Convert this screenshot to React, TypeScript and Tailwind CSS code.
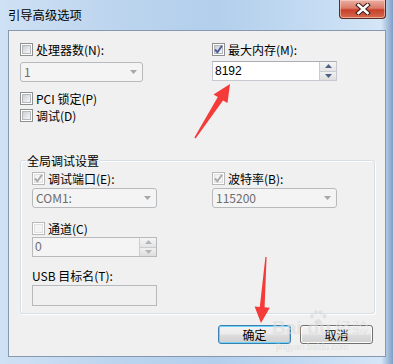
import React from "react";

const FONT = '"Noto Sans CJK SC", "Liberation Sans", sans-serif';

function CheckBox({ checked = false, disabled = false }: { checked?: boolean; disabled?: boolean }) {
  return (
    <div
      className={
        "relative w-[13px] h-[13px] shrink-0 border p-[1px] bg-white " +
        (disabled ? "border-[#b8b8b8]" : "border-[#8e8f8f]")
      }
    >
      <div
        className={
          "w-full h-full border " +
          (disabled
            ? "border-[#e0e0e0] bg-[#f4f4f4]"
            : "border-[#b4b8bd] bg-[linear-gradient(135deg,#c9cdd3_0%,#e4e6e9_55%,#f7f7f8_100%)]")
        }
      />
      {checked && (
        <svg className="absolute left-0 top-0" width="11" height="11" viewBox="0 0 11 11">
          <path
            d="M2 5.5 L4.4 8.2 L9 1.8"
            fill="none"
            stroke={disabled ? "#a9a9a9" : "#4a5d9a"}
            strokeWidth="1.9"
            strokeLinejoin="miter"
          />
        </svg>
      )}
    </div>
  );
}

function CheckRow({ label, checked, disabled }: { label: string; checked?: boolean; disabled?: boolean }) {
  return (
    <div className="flex items-center h-[13px] gap-[3px]">
      <CheckBox checked={checked} disabled={disabled} />
      <span className="text-[12px] leading-[13px] text-black whitespace-nowrap">{label}</span>
    </div>
  );
}

function Combo({ value, w }: { value: string; w: string }) {
  return (
    <div
      className={
        "flex items-center justify-between h-[20px] rounded-[3px] border border-[#b6babd] bg-[#f4f4f4] pl-[3px] pr-[5px] " +
        w
      }
    >
      <span className="text-[12px] leading-[14px] text-[#6d6d6d]">{value}</span>
      <svg width="7" height="4" viewBox="0 0 7 4">
        <path d="M0 0 H7 L3.5 4 Z" fill="#a7a7a7" />
      </svg>
    </div>
  );
}

function SpinBtns({ disabled }: { disabled?: boolean }) {
  const c = disabled ? "#b5b5b5" : "#4d6185";
  return (
    <div className="flex flex-col w-[17px] h-full border-l border-[#c9ccd0]">
      <div className="flex-1 flex items-center justify-center border-b border-[#c9ccd0] bg-[linear-gradient(#f5f5f5,#e4e4e4)]">
        <svg width="7" height="4" viewBox="0 0 7 4">
          <path d="M0 4 H7 L3.5 0 Z" fill={c} />
        </svg>
      </div>
      <div className="flex-1 flex items-center justify-center bg-[linear-gradient(#f0f0f0,#dedede)]">
        <svg width="7" height="4" viewBox="0 0 7 4">
          <path d="M0 0 H7 L3.5 4 Z" fill={c} />
        </svg>
      </div>
    </div>
  );
}

function Spin({ value, disabled }: { value: string; disabled?: boolean }) {
  return (
    <div
      className={
        "flex items-stretch h-[20px] w-[125px] border " +
        (disabled ? "border-[#b6babd] bg-[#f4f4f4]" : "border-[#c6cad0] border-t-[#abadb3] bg-white")
      }
    >
      <span
        className={
          "flex-1 flex items-center pl-[2px] text-[12px] leading-[14px] " +
          (disabled ? "text-[#6d6d6d]" : "text-black")
        }
        style={{ fontFamily: '"Liberation Sans", sans-serif' }}
      >
        {value}
      </span>
      <SpinBtns disabled={disabled} />
    </div>
  );
}

function Button({ label, def }: { label: string; def?: boolean }) {
  return (
    <div
      className={
        "flex items-center justify-center w-[73px] h-[19px] rounded-[3px] border text-[12px] text-black bg-[linear-gradient(#f3f3f3_0%,#ebebeb_48%,#dddddd_52%,#cfcfcf_100%)] " +
        (def
          ? "border-[#3c7fb1] shadow-[inset_0_0_0_1px_#6fd4fb]"
          : "border-[#707070] shadow-[inset_0_0_0_1px_#fbfbfb]")
      }
    >
      {label}
    </div>
  );
}

export default function App() {
  return (
    <div
      className="relative w-[393px] h-[364px] overflow-hidden bg-[linear-gradient(90deg,#cfe1f4_0%,#bcd4ee_30%,#b3cfec_55%,#c4dbf2_80%,#d4e6f7_97%,#7f9fc6_100%)]"
      style={{ fontFamily: FONT }}
    >
      {/* title bar */}
      <div className="flex justify-between h-[30px] pl-[8px] pr-[7px]">
        <span className="self-center text-[12.3px] leading-[14px] text-black -mt-[1px]">引导高级选项</span>
        <div className="flex items-center justify-center w-[47px] h-[19px] rounded-b-[4px] border border-t-0 border-[#5b2b24] bg-[linear-gradient(#eab0a4_0%,#dc7b68_45%,#c8402a_55%,#d66a4f_100%)] shadow-[inset_0_0_0_1px_rgba(255,220,210,0.55)]">
          <svg width="16" height="12" viewBox="0 0 16 12">
            <path d="M3.5 2 L12.5 10 M12.5 2 L3.5 10" stroke="#3d1e18" strokeWidth="4.6" strokeLinecap="square" />
            <path d="M3.5 2 L12.5 10 M12.5 2 L3.5 10" stroke="#ffffff" strokeWidth="2.6" strokeLinecap="square" />
          </svg>
        </div>
      </div>

      {/* client area */}
      <div className="ml-[8px] mr-[7px] h-[327px] border border-[#8699b0] bg-[#f0f0f0] flex flex-col">
        {/* top options */}
        <div className="flex pl-[11px] pt-[12px]">
          <div className="flex flex-col w-[192px]">
            <CheckRow label="处理器数(N):" />
            <div className="mt-[6px]">
              <Combo value="1" w="w-[123px]" />
            </div>
            <div className="mt-[10px]">
              <CheckRow label="PCI 锁定(P)" />
            </div>
            <div className="mt-[4px]">
              <CheckRow label="调试(D)" />
            </div>
          </div>
          <div className="flex flex-col">
            <CheckRow label="最大内存(M):" checked />
            <div className="mt-[5px]">
              <Spin value="8192" />
            </div>
          </div>
        </div>

        {/* group box */}
        <div className="mt-[38px] ml-[11px] w-[355px] h-[154px] rounded-[3px] border border-[#d5dfe5] shadow-[inset_1px_1px_0_#ffffff,1px_1px_0_#ffffff] flex flex-col">
          <span className="-mt-[9px] ml-[5px] px-[1px] w-fit h-[17px] leading-[17px] bg-[#f0f0f0] text-[12px] text-black">
            全局调试设置
          </span>
          <div className="flex pl-[11px] mt-[3px]">
            <div className="flex flex-col w-[180px]">
              <CheckRow label="调试端口(E):" checked disabled />
              <div className="mt-[3px]">
                <Combo value="COM1:" w="w-[125px]" />
              </div>
              <div className="mt-[14px]">
                <CheckRow label="通道(C)" disabled />
              </div>
              <div className="mt-[2px]">
                <Spin value="0" disabled />
              </div>
              <span className="mt-[11px] h-[16px] leading-[16px] text-[12px] text-black">USB 目标名(T):</span>
              <div className="mt-[1px] w-[125px] h-[21px] border border-[#b6babd] bg-[#f0f0f0]" />
            </div>
            <div className="flex flex-col">
              <CheckRow label="波特率(B):" checked disabled />
              <div className="mt-[3px]">
                <Combo value="115200" w="w-[125px]" />
              </div>
            </div>
          </div>
        </div>

        {/* buttons */}
        <div className="flex justify-end gap-[9px] mt-[11px] pr-[12px]">
          <Button label="确定" def />
          <Button label="取消" />
        </div>
      </div>

      {/* watermark */}
      <svg className="absolute left-[308px] top-[310px] pointer-events-none opacity-60" width="20" height="16" viewBox="0 0 20 16">
        <ellipse cx="4" cy="6" rx="2" ry="2.6" fill="#d8d8d8" />
        <ellipse cx="8" cy="2.6" rx="2" ry="2.4" fill="#d8d8d8" />
        <ellipse cx="12.5" cy="2.6" rx="2" ry="2.4" fill="#d8d8d8" />
        <ellipse cx="16.5" cy="6" rx="2" ry="2.6" fill="#d8d8d8" />
        <path d="M6 13 Q10 5 14.5 13 Q10 15.5 6 13 Z" fill="#d8d8d8" />
      </svg>
      <div className="absolute left-[272px] top-[318px] flex items-end pointer-events-none select-none opacity-60">
        <span className="text-[19px] leading-[20px] font-bold text-[#dcdcdc]" style={{ fontFamily: '"Liberation Sans", sans-serif' }}>
          Bai
        </span>
        <span className="text-[19px] leading-[20px] font-bold text-[#dcdcdc] ml-[6px]" style={{ fontFamily: '"Liberation Sans", sans-serif' }}>
          du
        </span>
        <span className="text-[17px] leading-[20px] text-[#dcdcdc] ml-[4px]">经验</span>
      </div>
      <div
        className="absolute left-[276px] top-[342px] text-[9px] leading-[10px] text-[#dadada] opacity-70 pointer-events-none"
        style={{ fontFamily: '"Liberation Sans", sans-serif' }}
      >
        jingyan.baidu.com
      </div>

      {/* red arrows */}
      <svg className="absolute left-0 top-0 pointer-events-none" width="393" height="364" viewBox="0 0 393 364">
        <polygon
          points="230,84 227.5,103 223,100.5 195.6,138.4 194.4,137.6 217.8,97 213.5,94.5"
          fill="#f53a3a"
        />
        <polygon
          points="261,323 269.8,307.8 264.6,307.3 266.6,257 265.4,257 259.8,306.9 254.6,306.5"
          fill="#f53a3a"
        />
      </svg>
    </div>
  );
}
